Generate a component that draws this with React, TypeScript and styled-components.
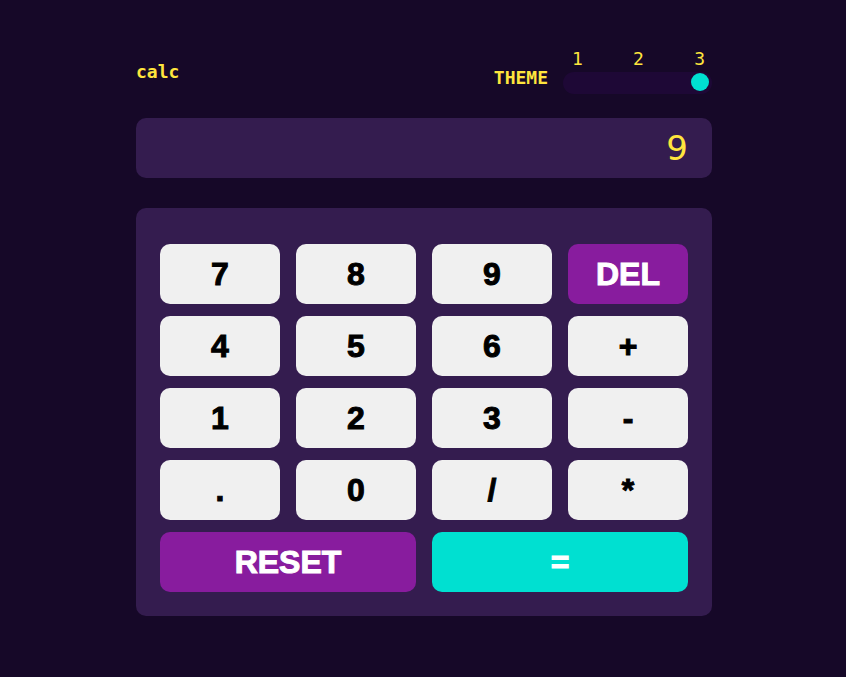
import styled, { createGlobalStyle } from "styled-components";

const GlobalStyle = createGlobalStyle`
  html, body {
    margin: 0;
    padding: 0;
    background: #160828;
  }
`;

const colors = {
  page: "#160828",
  panel: "#341c4f",
  track: "#1e0836",
  yellow: "#ffe53d",
  key: "#f0f0f0",
  purple: "#881c9e",
  cyan: "#00e0d1",
};

const Wrapper = styled.div`
  width: 576px;
  margin-left: calc(50% - 287px);
  padding-top: 48px;
  font-family: "DejaVu Sans Mono", "Liberation Mono", monospace;
`;

const Header = styled.header`
  display: flex;
  justify-content: space-between;
  align-items: center;
`;

const Logo = styled.h1`
  margin: 0;
  font-size: 18px;
  font-weight: bold;
  color: ${colors.yellow};
`;

const ThemeBox = styled.div`
  display: flex;
  align-items: flex-end;
  gap: 15px;
`;

const ThemeLabel = styled.span`
  font-size: 18px;
  font-weight: bold;
  color: ${colors.yellow};
  padding-bottom: 6px;
`;

const Switch = styled.div`
  display: flex;
  flex-direction: column;
  gap: 3px;
  width: 149px;
`;

const Numbers = styled.div`
  display: flex;
  justify-content: space-between;
  padding: 0 7px 0 9px;
  font-size: 18px;
  line-height: 21px;
  color: ${colors.yellow};
`;

const Track = styled.div`
  height: 22px;
  border-radius: 11px;
  background: ${colors.track};
  display: flex;
  align-items: center;
  justify-content: flex-end;
  padding: 0 3px 2px;
  box-sizing: border-box;
`;

const Knob = styled.div`
  width: 18px;
  height: 18px;
  border-radius: 50%;
  background: ${colors.cyan};
`;

const Screen = styled.div`
  margin-top: 24px;
  height: 60px;
  border-radius: 10px;
  background: ${colors.panel};
  display: flex;
  align-items: center;
  justify-content: flex-end;
  padding: 0 24px;
  font-family: "DejaVu Sans", "Liberation Sans", sans-serif;
  font-size: 34px;
  color: ${colors.yellow};
`;

const Keypad = styled.div`
  margin-top: 30px;
  border-radius: 10px;
  background: ${colors.panel};
  padding: 36px 24px 24px;
  display: grid;
  grid-template-columns: repeat(4, 120px);
  grid-auto-rows: 60px;
  column-gap: 16px;
  row-gap: 12px;
`;

type Variant = "plain" | "purple" | "cyan";

const Key = styled.button<{ $variant?: Variant; $wide?: boolean }>`
  border: none;
  border-radius: 10px;
  font-family: "Liberation Sans", Arial, sans-serif;
  font-weight: 900;
  font-size: 32px;
  cursor: pointer;
  grid-column: ${(p) => (p.$wide ? "span 2" : "auto")};
  background: ${(p) =>
    p.$variant === "purple" ? colors.purple : p.$variant === "cyan" ? colors.cyan : colors.key};
  color: ${(p) => (p.$variant && p.$variant !== "plain" ? "#ffffff" : "#000000")};
  -webkit-text-stroke: 1px currentColor;
`;

const rows = ["7", "8", "9", "DEL", "4", "5", "6", "+", "1", "2", "3", "-", ".", "0", "/", "*"];

const App = () => {
  return (
    <Wrapper>
      <GlobalStyle />
      <Header>
        <Logo>calc</Logo>
        <ThemeBox>
          <ThemeLabel>THEME</ThemeLabel>
          <Switch>
            <Numbers>
              <span>1</span>
              <span>2</span>
              <span>3</span>
            </Numbers>
            <Track>
              <Knob />
            </Track>
          </Switch>
        </ThemeBox>
      </Header>
      <Screen>9</Screen>
      <Keypad>
        {rows.map((k) => (
          <Key key={k} $variant={k === "DEL" ? "purple" : "plain"}>
            {k}
          </Key>
        ))}
        <Key $wide $variant="purple">RESET</Key>
        <Key $wide $variant="cyan">=</Key>
      </Keypad>
    </Wrapper>
  );
};

export default App;
